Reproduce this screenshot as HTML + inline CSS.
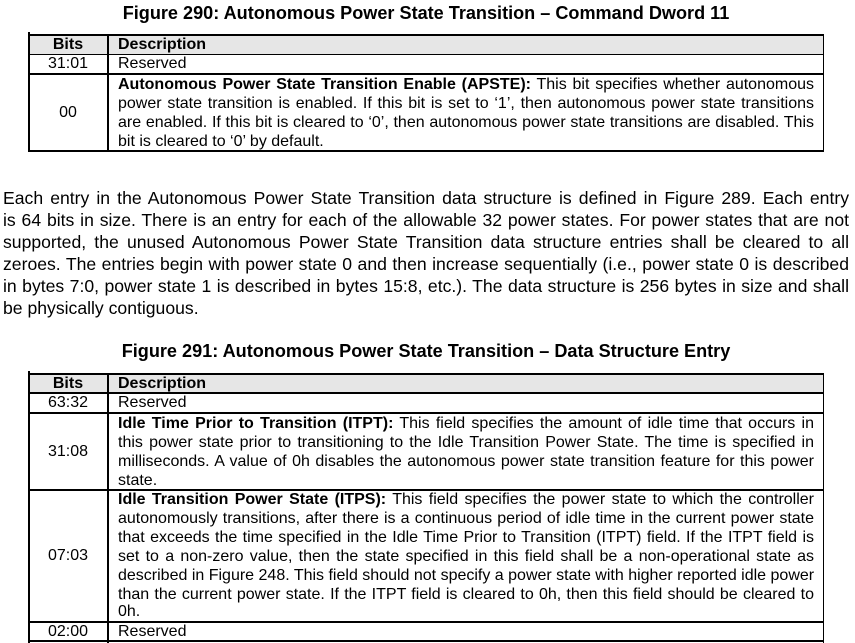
<!DOCTYPE html>
<html><head><meta charset="utf-8"><style>
*{margin:0;padding:0;box-sizing:border-box}
body{width:855px;height:643px;background:#fff;position:relative;font-family:"Liberation Sans",Arial,sans-serif;color:#000;overflow:hidden}
.t{position:absolute;left:0;width:852px;text-align:center;font-weight:bold;font-size:18.1px;line-height:22px}
.v{position:absolute;background:#000;width:1.5px}
.hl{position:absolute;height:1.5px;background:#000}
.g{position:absolute;background:#e6e6e6}
.c{position:absolute;font-size:16px;line-height:19px;white-space:nowrap}
.j{position:absolute;font-size:16px;line-height:19px;text-align:justify;text-align-last:justify;white-space:nowrap}
.p{position:absolute;left:3px;width:846px;font-size:17.6px;line-height:22px;text-align:justify;text-align-last:justify;white-space:nowrap}
.b{font-weight:bold}
</style></head><body>
<div class="t" style="top:2px">Figure 290: Autonomous Power State Transition – Command Dword 11</div>
<div class="g" style="left:28px;top:34px;width:795px;height:20px"></div>
<div class="hl" style="left:28px;top:34px;width:796px"></div>
<div class="hl" style="left:28px;top:53.5px;width:796px"></div>
<div class="hl" style="left:28px;top:73px;width:796px"></div>
<div class="hl" style="left:28px;top:150px;width:796px"></div>
<div class="v" style="left:28px;top:32px;height:120px"></div>
<div class="v" style="left:107px;top:34px;height:118px"></div>
<div class="v" style="left:822.5px;top:34px;height:118px"></div>
<div class="c b" style="left:28px;width:80px;text-align:center;top:35px">Bits</div>
<div class="c b" style="left:118px;top:35px">Description</div>
<div class="c" style="left:28px;width:80px;text-align:center;top:54px">31:01</div>
<div class="c" style="left:118px;top:54px">Reserved</div>
<div class="c" style="left:28px;width:80px;text-align:center;top:103px">00</div>
<div class="j" style="left:118px;width:696px;top:75px"><b>Autonomous Power State Transition Enable (APSTE):</b> This bit specifies whether autonomous</div>
<div class="j" style="left:118px;width:696px;top:94px">power state transition is enabled. If this bit is set to ‘1’, then autonomous power state transitions</div>
<div class="j" style="left:118px;width:696px;top:113px">are enabled. If this bit is cleared to ‘0’, then autonomous power state transitions are disabled. This</div>
<div class="c" style="left:118px;top:132px">bit is cleared to ‘0’ by default.</div>

<div class="p" style="top:187px">Each entry in the Autonomous Power State Transition data structure is defined in Figure 289. Each entry</div>
<div class="p" style="top:209px">is 64 bits in size. There is an entry for each of the allowable 32 power states. For power states that are not</div>
<div class="p" style="top:231px">supported, the unused Autonomous Power State Transition data structure entries shall be cleared to all</div>
<div class="p" style="top:253px">zeroes. The entries begin with power state 0 and then increase sequentially (i.e., power state 0 is described</div>
<div class="p" style="top:275px">in bytes 7:0, power state 1 is described in bytes 15:8, etc.). The data structure is 256 bytes in size and shall</div>
<div class="p" style="top:297px;text-align-last:left">be physically contiguous.</div>

<div class="t" style="top:340px">Figure 291: Autonomous Power State Transition – Data Structure Entry</div>
<div class="g" style="left:28px;top:373px;width:795px;height:20px"></div>
<div class="hl" style="left:28px;top:373px;width:796px"></div>
<div class="hl" style="left:28px;top:392px;width:796px"></div>
<div class="hl" style="left:28px;top:412px;width:796px"></div>
<div class="hl" style="left:28px;top:489px;width:796px"></div>
<div class="hl" style="left:28px;top:621px;width:796px"></div>
<div class="hl" style="left:28px;top:640px;width:796px"></div>
<div class="v" style="left:28px;top:371px;height:272px"></div>
<div class="v" style="left:107px;top:373px;height:270px"></div>
<div class="v" style="left:822.5px;top:373px;height:270px"></div>
<div class="c b" style="left:28px;width:80px;text-align:center;top:374px">Bits</div>
<div class="c b" style="left:118px;top:374px">Description</div>
<div class="c" style="left:28px;width:80px;text-align:center;top:393px">63:32</div>
<div class="c" style="left:118px;top:393px">Reserved</div>
<div class="c" style="left:28px;width:80px;text-align:center;top:442px">31:08</div>
<div class="j" style="left:118px;width:696px;top:414px"><b>Idle Time Prior to Transition (ITPT):</b> This field specifies the amount of idle time that occurs in</div>
<div class="j" style="left:118px;width:696px;top:433px">this power state prior to transitioning to the Idle Transition Power State. The time is specified in</div>
<div class="j" style="left:118px;width:696px;top:452px">milliseconds. A value of 0h disables the autonomous power state transition feature for this power</div>
<div class="c" style="left:118px;top:471px">state.</div>
<div class="c" style="left:28px;width:80px;text-align:center;top:546px">07:03</div>
<div class="j" style="left:118px;width:696px;top:490px"><b>Idle Transition Power State (ITPS):</b> This field specifies the power state to which the controller</div>
<div class="j" style="left:118px;width:696px;top:509px">autonomously transitions, after there is a continuous period of idle time in the current power state</div>
<div class="j" style="left:118px;width:696px;top:528px">that exceeds the time specified in the Idle Time Prior to Transition (ITPT) field. If the ITPT field is</div>
<div class="j" style="left:118px;width:696px;top:547px">set to a non-zero value, then the state specified in this field shall be a non-operational state as</div>
<div class="j" style="left:118px;width:696px;top:566px">described in Figure 248. This field should not specify a power state with higher reported idle power</div>
<div class="j" style="left:118px;width:696px;top:585px">than the current power state. If the ITPT field is cleared to 0h, then this field should be cleared to</div>
<div class="c" style="left:118px;top:602px">0h.</div>
<div class="c" style="left:28px;width:80px;text-align:center;top:622px">02:00</div>
<div class="c" style="left:118px;top:622px">Reserved</div>
</body></html>
